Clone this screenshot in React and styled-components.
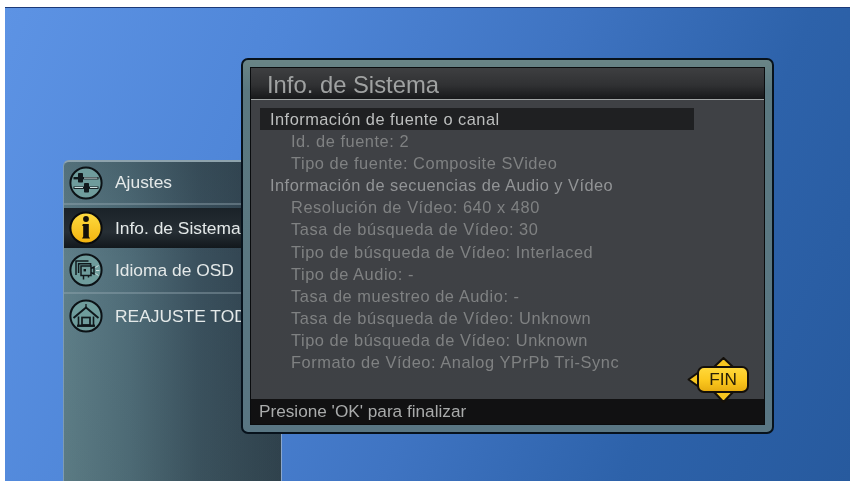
import React from "react";
import styled, { createGlobalStyle } from "styled-components";

const Global = createGlobalStyle`
  html, body { margin: 0; padding: 0; background: #fff; overflow: hidden; }
  body { font-family: "Liberation Sans", Arial, sans-serif; }
`;

const Screen = styled.div`
  position: relative;
  box-sizing: border-box;
  width: 845px;
  height: 474px;
  margin: 7px 0 0 5px;
  border-top: 1px solid #1c3a78;
  background: linear-gradient(112deg, #5d93e4 0%, #4f86d8 28%, #3f74c2 55%, #2d62aa 78%, #275a9e 100%);
  overflow: hidden;
  display: flex;
  align-items: flex-end;
  filter: blur(0.35px);
`;

const SideMenu = styled.nav`
  box-sizing: border-box;
  width: 219px;
  height: 321px;
  margin-left: 58px;
  border-radius: 6px 0 0 0;
  border-top: 2px solid #8ea3ad;
  border-left: 1px solid #7f9bb0;
  border-right: 1px solid #8aa6cc;
  background:
    linear-gradient(180deg, rgba(40,58,68,.22) 0%, rgba(0,0,0,0) 30%, rgba(60,90,90,.12) 100%),
    linear-gradient(90deg, #5f7f89 0%, #4f6c78 30%, #3a505d 62%, #2e3f4b 100%);
  display: flex;
  flex-direction: column;
`;

const MenuRow = styled.div`
  box-sizing: border-box;
  height: ${p => p.$h}px;
  flex: none;
  display: flex;
  align-items: center;
  gap: 11px;
  padding-left: 5px;
  color: #e4e9e9;
  font-size: 17.4px;
  letter-spacing: 0;
  white-space: nowrap;
  ${p => p.$sep ? "border-bottom: 2px solid rgba(150,170,178,.42);" : ""}
  ${p => p.$active ? "margin-top: 3px; background: linear-gradient(180deg,#1a2228 0%,#262e34 60%,#12181c 100%);" : ""}
`;

const MenuLabel = styled.span`
  margin-left: 1px;
`;

const MenuIcon = styled.svg`
  width: 34px;
  height: 34px;
  flex: none;
`;

const Modal = styled.section`
  position: absolute;
  left: 236px;
  top: 50px;
  box-sizing: border-box;
  width: 533px;
  height: 376px;
  padding: 7px;
  border-radius: 7px;
  border: 2px solid #07121c;
  background: linear-gradient(180deg, #6a8586 0%, #5b7880 8%, #597683 100%);
  display: flex;
`;

const Inner = styled.div`
  position: relative;
  flex: 1;
  border: 1px solid #0a0c0e;
  display: flex;
  flex-direction: column;
  min-width: 0;
`;

const TitleBar = styled.header`
  box-sizing: border-box;
  height: 32px;
  flex: none;
  padding-left: 16px;
  border-bottom: 1px solid #a2a6a6;
  background: linear-gradient(180deg, #3e3f41 0%, #303133 55%, #17181a 100%);
  color: #a0a2a2;
  font-size: 23.8px;
  line-height: 33px;
`;

const Body = styled.div`
  flex: 1;
  min-height: 0;
  padding: 8px 0 0 9px;
  background: rgba(60,61,64,.925);
`;

const InfoLine = styled.div`
  box-sizing: border-box;
  height: 22.1px;
  line-height: 22px;
  font-size: 16.4px;
  letter-spacing: ${p => (p.$sub ? ".55px" : ".47px")};
  white-space: nowrap;
  padding-left: ${p => (p.$sub ? 31 : 10)}px;
  color: ${p => (p.$sub ? "#7f8182" : p.$active ? "#bdbfbf" : "#929496")};
  ${p => p.$active ? "background:#1f2022; width:434px;" : ""}
`;

const Footer = styled.footer`
  box-sizing: border-box;
  height: 25px;
  flex: none;
  padding-left: 8px;
  background: #111112;
  color: #a9abab;
  font-size: 17.2px;
  line-height: 25px;
`;

const FinWrap = styled.div`
  position: absolute;
  left: 436px;
  top: 289px;
  width: 64px;
  height: 46px;
`;

const FinArrows = styled.svg`
  position: absolute;
  inset: 0;
  width: 64px;
  height: 46px;
`;

const FinButton = styled.div`
  position: absolute;
  left: 10px;
  top: 9px;
  box-sizing: border-box;
  width: 52px;
  height: 27px;
  border: 2px solid #14100a;
  border-radius: 7px;
  background: linear-gradient(180deg, #ffd83a 0%, #fbc81e 55%, #e8ad10 100%);
  color: #2a2008;
  font-size: 17.2px;
  line-height: 23px;
  text-align: center;
`;

const infoLines = [
  { t: "Información de fuente o canal", active: true },
  { t: "Id. de fuente: 2", sub: true },
  { t: "Tipo de fuente: Composite SVideo", sub: true },
  { t: "Información de secuencias de Audio y Vídeo" },
  { t: "Resolución de Vídeo: 640 x 480", sub: true },
  { t: "Tasa de búsqueda de Vídeo: 30", sub: true },
  { t: "Tipo de búsqueda de Vídeo: Interlaced", sub: true },
  { t: "Tipo de Audio: -", sub: true },
  { t: "Tasa de muestreo de Audio: -", sub: true },
  { t: "Tasa de búsqueda de Vídeo: Unknown", sub: true },
  { t: "Tipo de búsqueda de Vídeo: Unknown", sub: true },
  { t: "Formato de Vídeo: Analog YPrPb Tri-Sync", sub: true },
];

const Disc = ({ fill = "#6f9c9c" }) => (
  <circle cx="17" cy="17" r="15.6" fill={fill} stroke="#0c1216" strokeWidth="2" />
);

const SlidersIcon = () => (
  <MenuIcon viewBox="0 0 34 34">
    <Disc />
    <g fill="#10181c">
      <rect x="4.5" y="11" width="25" height="2.4" />
      <rect x="4.5" y="20.5" width="25" height="2.4" />
      <rect x="9" y="7" width="5" height="9.5" rx=".8" />
      <rect x="15" y="17" width="5" height="9.5" rx=".8" />
    </g>
    <rect x="15" y="11.6" width="13.5" height="1" fill="#cfe0e0" />
    <rect x="21" y="21" width="7.5" height="1" fill="#cfe0e0" />
    <rect x="5.5" y="21" width="8.5" height="1" fill="#cfe0e0" />
  </MenuIcon>
);

const InfoIcon = () => (
  <MenuIcon viewBox="0 0 34 34">
    <defs>
      <linearGradient id="gold" x1="0" y1="0" x2="0" y2="1">
        <stop offset="0" stopColor="#ffdc40" />
        <stop offset="1" stopColor="#f2b20e" />
      </linearGradient>
    </defs>
    <circle cx="17" cy="17" r="15.6" fill="url(#gold)" stroke="#0a0c0e" strokeWidth="2" />
    <circle cx="17" cy="8" r="2.9" fill="#14100a" />
    <path d="M14 13h5.8v12.6l1.2 2H13l1.2-2V15l-1.2-.4z" fill="#14100a" />
  </MenuIcon>
);

const LanguageIcon = () => (
  <MenuIcon viewBox="0 0 34 34">
    <Disc />
    <g fill="none" stroke="#10181c" strokeWidth="1.5">
      <path d="M7 22V8h12.5" />
      <path d="M9.6 20V10.8h12v2" />
      <rect x="12" y="13" width="10" height="9.5" fill="#6f9c9c" />
      <path d="M14.5 22.5v4M19.5 22.5v2" />
      <path d="M22 15.5l3-1.5v7l-3-1.5" />
    </g>
    <rect x="14.6" y="16" width="2.4" height="2.4" fill="#10181c" />
    <g stroke="#dce8e8" strokeWidth=".9">
      <path d="M26.5 14.5l3-2M27 17.5h3.4M26.5 20.5l3 2" />
    </g>
  </MenuIcon>
);

const HomeIcon = () => (
  <MenuIcon viewBox="0 0 34 34">
    <Disc />
    <path d="M4.5 19L17 8.5 29.5 19" fill="none" stroke="#10181c" strokeWidth="2" />
    <path d="M9.5 17.5V27h15v-9.5" fill="none" stroke="#10181c" strokeWidth="1.6" />
    <rect x="8" y="25.6" width="18" height="2.2" fill="#10181c" />
    <rect x="13" y="18.5" width="8" height="7.5" fill="none" stroke="#10181c" strokeWidth="1.7" />
    <path d="M17 8.5V5" stroke="#10181c" strokeWidth="1.3" />
  </MenuIcon>
);

export default function App() {
  return (
    <>
      <Global />
      <Screen>
        <SideMenu>
          <MenuRow $h={43} $sep><SlidersIcon /><MenuLabel>Ajustes</MenuLabel></MenuRow>
          <MenuRow $h={40} $active><InfoIcon /><MenuLabel>Info. de Sistema</MenuLabel></MenuRow>
          <MenuRow $h={46} $sep><LanguageIcon /><MenuLabel>Idioma de OSD</MenuLabel></MenuRow>
          <MenuRow $h={44}><HomeIcon /><MenuLabel>REAJUSTE TODOS</MenuLabel></MenuRow>
        </SideMenu>
        <Modal>
          <Inner>
            <TitleBar>Info. de Sistema</TitleBar>
            <Body>
              {infoLines.map(l => (
                <InfoLine key={l.t} $sub={l.sub} $active={l.active}>{l.t}</InfoLine>
              ))}
            </Body>
            <Footer>Presione 'OK' para finalizar</Footer>
            <FinWrap>
              <FinArrows viewBox="0 0 64 46">
                <g fill="#f7c61f" stroke="#14100a" strokeWidth="2" strokeLinejoin="round">
                  <path d="M27 10L36.5 1L46 10z" />
                  <path d="M27 35L36.5 45L46 35z" />
                  <path d="M12 15L1.5 22.5L12 30z" />
                </g>
              </FinArrows>
              <FinButton>FIN</FinButton>
            </FinWrap>
          </Inner>
        </Modal>
      </Screen>
    </>
  );
}
